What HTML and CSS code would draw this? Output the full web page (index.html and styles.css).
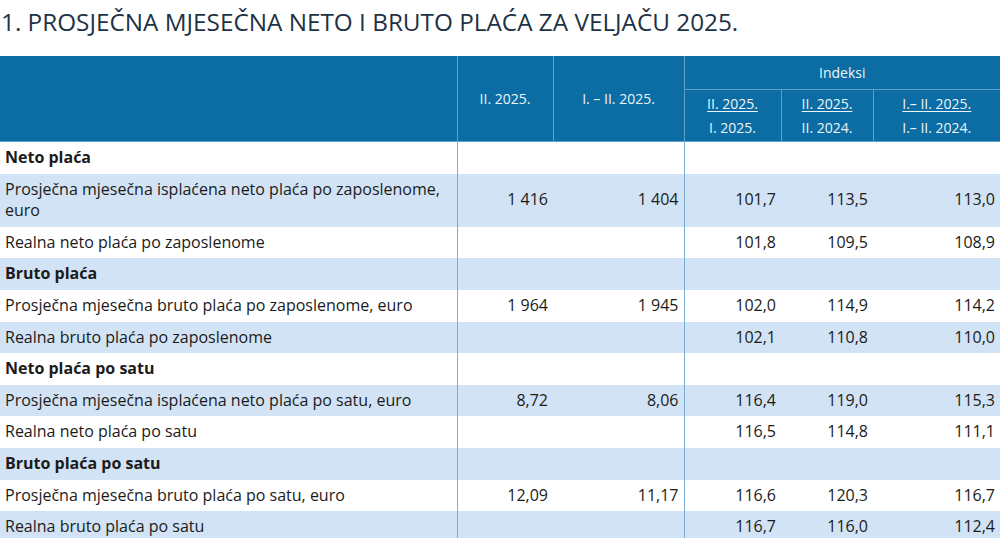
FILE: index.html
```html
<!DOCTYPE html>
<html lang="hr">
<head>
<meta charset="utf-8">
<link rel="stylesheet" href="styles.css">
</head>
<body>
<h1 class="title">1. PROSJEČNA MJESEČNA NETO I BRUTO PLAĆA ZA VELJAČU 2025.</h1>
<table class="data">
  <colgroup>
    <col class="c-label"><col class="c-a"><col class="c-b"><col class="c-c"><col class="c-d"><col class="c-e">
  </colgroup>
  <thead>
    <tr class="h1row">
      <th rowspan="2" class="h-label"></th>
      <th rowspan="2">II. 2025.</th>
      <th rowspan="2">I. – II. 2025.</th>
      <th colspan="3" class="h-idx">Indeksi</th>
    </tr>
    <tr class="h2row">
      <th class="sub"><span class="u">II. 2025.</span><br>I. 2025.</th>
      <th class="sub"><span class="u">II. 2025.</span><br>II. 2024.</th>
      <th class="sub"><span class="u">I.– II. 2025.</span><br>I.– II. 2024.</th>
    </tr>
  </thead>
  <tbody>
    <tr class="sec"><td class="lbl">Neto plaća</td><td class="sep"></td><td></td><td class="sep"></td><td></td><td></td></tr>
    <tr class="alt"><td class="lbl">Prosječna mjesečna isplaćena neto plaća po zaposlenome, euro</td><td class="sep">1 416</td><td>1 404</td><td class="sep">101,7</td><td>113,5</td><td>113,0</td></tr>
    <tr><td class="lbl">Realna neto plaća po zaposlenome</td><td class="sep"></td><td></td><td class="sep">101,8</td><td>109,5</td><td>108,9</td></tr>
    <tr class="sec alt"><td class="lbl">Bruto plaća</td><td class="sep"></td><td></td><td class="sep"></td><td></td><td></td></tr>
    <tr><td class="lbl">Prosječna mjesečna bruto plaća po zaposlenome, euro</td><td class="sep">1 964</td><td>1 945</td><td class="sep">102,0</td><td>114,9</td><td>114,2</td></tr>
    <tr class="alt"><td class="lbl">Realna bruto plaća po zaposlenome</td><td class="sep"></td><td></td><td class="sep">102,1</td><td>110,8</td><td>110,0</td></tr>
    <tr class="sec"><td class="lbl">Neto plaća po satu</td><td class="sep"></td><td></td><td class="sep"></td><td></td><td></td></tr>
    <tr class="alt"><td class="lbl">Prosječna mjesečna isplaćena neto plaća po satu, euro</td><td class="sep">8,72</td><td>8,06</td><td class="sep">116,4</td><td>119,0</td><td>115,3</td></tr>
    <tr><td class="lbl">Realna neto plaća po satu</td><td class="sep"></td><td></td><td class="sep">116,5</td><td>114,8</td><td>111,1</td></tr>
    <tr class="sec alt"><td class="lbl">Bruto plaća po satu</td><td class="sep"></td><td></td><td class="sep"></td><td></td><td></td></tr>
    <tr><td class="lbl">Prosječna mjesečna bruto plaća po satu, euro</td><td class="sep">12,09</td><td>11,17</td><td class="sep">116,6</td><td>120,3</td><td>116,7</td></tr>
    <tr class="alt"><td class="lbl">Realna bruto plaća po satu</td><td class="sep"></td><td></td><td class="sep">116,7</td><td>116,0</td><td>112,4</td></tr>
  </tbody>
</table>
</body>
</html>
```
FILE: styles.css
```css
html, body {
  margin: 0;
  padding: 0;
  background: #ffffff;
}
body {
  font-family: "Open Sans", "Noto Sans", sans-serif;
  color: #1b1b1b;
  overflow: hidden;
}
.title {
  margin: 0 0 18px 0;
  padding: 6px 0 0 1px;
  font-size: 24.3px;
  line-height: 32px;
  font-weight: 400;
  color: #1e3246;
  letter-spacing: 0;
}
.data {
  width: 1000px;
  border-collapse: collapse;
  table-layout: fixed;
}
.c-label { width: 457px; }
.c-a { width: 96px; }
.c-b { width: 131px; }
.c-c { width: 97px; }
.c-d { width: 92px; }
.c-e { width: 127px; }

.data thead th {
  background: #0b6da3;
  color: #eef4f9;
  font-weight: 400;
  font-size: 14px;
  text-align: center;
  vertical-align: middle;
  border: 1px solid #5f9fcb;
  border-top: none;
  padding: 0 4px;
}
.data thead th.h-label { border-left: none; }
.data thead .h1row th.h-idx { height: 33px; }
.data thead .h2row th { height: 51px; line-height: 24px; }
.data thead .h2row th:last-child, .data thead .h1row th.h-idx { border-right: none; }
.u { text-decoration: underline; text-underline-offset: 2px; }

.data tbody td {
  font-size: 16px;
  line-height: 21.6px;
  padding: 5px 5px;
  text-align: right;
  vertical-align: middle;
  border: none;
}
.data tbody td.lbl {
  text-align: left;
  padding-right: 12px;
}
.data tbody td.sep { border-left: 1px solid #78aed3; }
.data tbody tr.alt td { background: #d1e3f4; }
.data tbody tr.sec td.lbl { font-weight: 700; }
```
